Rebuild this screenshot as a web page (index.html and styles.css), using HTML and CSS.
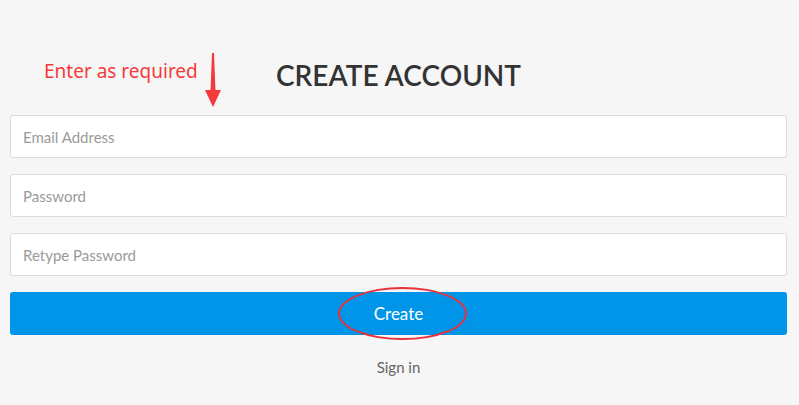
FILE: index.html
```html
<!DOCTYPE html>
<html>
<head>
<meta charset="utf-8">
<link rel="stylesheet" href="styles.css">
</head>
<body>
<div class="page">
  <h1 class="title">CREATE ACCOUNT</h1>
  <form class="form">
    <input class="field" type="text" placeholder="Email Address">
    <input class="field" type="password" placeholder="Password">
    <input class="field" type="password" placeholder="Retype Password">
    <div class="btn-wrap">
      <button class="btn" type="button">Create</button>
      <span class="ring"></span>
    </div>
    <a class="signin" href="#">Sign in</a>
  </form>
  <div class="note">Enter as required</div>
  <svg class="arrow" width="20" height="60" viewBox="0 0 20 60">
    <path d="M9 1 L11 1 L12.5 39 L7.5 39 Z" fill="#f43a3a"/>
    <path d="M2 38 L18 38 L10 55 Z" fill="#f43a3a"/>
  </svg>
</div>
</body>
</html>
```
FILE: styles.css
```css
html, body {
  margin: 0;
  padding: 0;
  background: #f6f6f6;
}
body {
  font-family: "Lato", "Noto Sans", sans-serif;
}
.page {
  position: relative;
  padding: 58px 12px 0 10px;
  height: 347px;
}
.title {
  margin: 0 0 23px;
  text-align: center;
  font-size: 28px;
  line-height: 34px;
  font-weight: 600;
  color: #333;
}
.form {
  display: flex;
  flex-direction: column;
  gap: 16px;
}
.field {
  box-sizing: border-box;
  height: 43px;
  width: 100%;
  margin: 0;
  border: 1px solid #dcdcdc;
  border-radius: 3px;
  background: #fff;
  padding: 0 12px;
  font-family: inherit;
  font-size: 15px;
  color: #333;
  outline: none;
}
.field::placeholder {
  color: #9a9a9a;
}
.btn-wrap {
  position: relative;
}
.btn {
  display: block;
  width: 100%;
  height: 43px;
  border: none;
  border-radius: 3px;
  background: #0095e9;
  color: #fff;
  font-family: inherit;
  font-size: 17px;
  cursor: pointer;
}
.ring {
  position: absolute;
  left: 328px;
  top: -5px;
  width: 125px;
  height: 49px;
  border: 2.5px solid #e8323a;
  border-radius: 50%;
}
.signin {
  align-self: center;
  margin-top: 6px;
  font-size: 15px;
  line-height: 20px;
  color: #666;
  text-decoration: none;
}
.note {
  position: absolute;
  left: 44px;
  top: 58px;
  font-family: "Noto Sans", sans-serif;
  font-size: 19px;
  line-height: 26px;
  color: #f43a3a;
}
.arrow {
  position: absolute;
  left: 203px;
  top: 52px;
}
```
